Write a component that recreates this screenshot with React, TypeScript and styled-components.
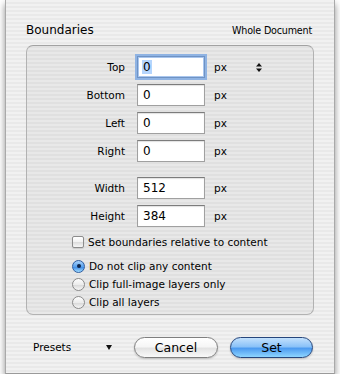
import styled, { createGlobalStyle, css } from 'styled-components'

const GlobalStyle = createGlobalStyle`
  body {
    margin: 0;
    background: #ffffff;
    font-family: "DejaVu Sans", "Liberation Sans", sans-serif;
    color: #000;
  }
`;

const stripes = css`
  background: repeating-linear-gradient(
    to bottom,
    #f1f1f1 0px,
    #f1f1f1 2px,
    #e9e9e9 2px,
    #e9e9e9 4px
  );
`;

const Sheet = styled.div`
  box-sizing: border-box;
  width: 330px;
  height: 374px;
  margin-left: 5px;
  padding: 22px 20px 0 20px;
  ${stripes};
  border-left: 1px solid #a9a9a9;
  border-right: 1px solid #a9a9a9;
  border-bottom: 1px solid #9a9a9a;
  box-shadow: 0 4px 7px rgba(0, 0, 0, 0.45);
  display: flex;
  flex-direction: column;
`;

const Header = styled.div`
  height: 16px;
  display: flex;
  align-items: center;
  justify-content: space-between;
`;

const Title = styled.div`
  font-size: 12px;
`;

const Scope = styled.div`
  font-size: 9.6px;
  letter-spacing: -0.2px;
  margin-right: 2px;
`;

const GroupBox = styled.div`
  box-sizing: border-box;
  margin-top: 7px;
  height: 270px;
  padding-top: 10px;
  border: 1px solid #b2b2b2;
  border-top-color: #a2a2a2;
  border-radius: 7px;
  background: rgba(0, 0, 0, 0.035);
  display: flex;
  flex-direction: column;
`;

const FieldRow = styled.div<{ $spaced?: boolean }>`
  height: 22px;
  display: flex;
  align-items: center;
  margin-bottom: 6px;
  margin-top: ${p => (p.$spaced ? '9px' : '0')};
`;

const Label = styled.div`
  width: 98px;
  text-align: right;
  font-size: 10.5px;
`;

const Field = styled.div<{ $focused?: boolean }>`
  box-sizing: border-box;
  width: 68px;
  height: 22px;
  margin-left: 12px;
  padding: 0 0 0 5px;
  background: #fff;
  border: 1px solid #a0a0a0;
  border-top-color: #7c7c7c;
  box-shadow: inset 0 1px 1px rgba(0, 0, 0, 0.12);
  font-size: 12px;
  display: flex;
  align-items: center;
  ${p =>
    p.$focused &&
    css`
      border-color: #6f93c4;
      box-shadow: 0 0 0 2px #8fb3e3, inset 0 0 0 1px #a9c6ee;
    `}
`;

const Selected = styled.span`
  background: #b5d5fd;
  padding: 0 1px;
  margin-left: -1px;
`;

const Unit = styled.div`
  margin-left: 9px;
  width: 12px;
  font-size: 10.5px;
`;

const Stepper = styled.svg`
  margin-left: 30px;
`;

const CheckRow = styled.label`
  display: flex;
  align-items: center;
  height: 14px;
  margin-top: 2px;
  padding-left: 45px;
  font-size: 10.5px;
`;

const CheckBox = styled.span`
  box-sizing: border-box;
  width: 12px;
  height: 12px;
  margin-right: 4px;
  border: 1px solid #8c8c8c;
  border-radius: 2px;
  background: linear-gradient(#ffffff, #f2f2f2 50%, #dedede 55%, #f7f7f7);
  box-shadow: 0 1px 1px rgba(0, 0, 0, 0.12);
`;

const RadioGroup = styled.div`
  margin-top: 8px;
  display: flex;
  flex-direction: column;
`;

const RadioRow = styled.label`
  display: flex;
  align-items: center;
  height: 18px;
  padding-left: 45px;
  font-size: 10.5px;
`;

const RadioDot = styled.span<{ $on?: boolean }>`
  box-sizing: border-box;
  width: 13px;
  height: 13px;
  margin-right: 4px;
  border-radius: 50%;
  border: 1px solid #8a8a8a;
  background: linear-gradient(#fdfdfd, #ececec 50%, #d9d9d9 55%, #f6f6f6);
  display: flex;
  align-items: center;
  justify-content: center;
  ${p =>
    p.$on &&
    css`
      border-color: #2f5da0;
      background: linear-gradient(#aad3fb, #5aa2ee 50%, #3f8be6 55%, #9fdcff);
      &::after {
        content: '';
        width: 4px;
        height: 4px;
        border-radius: 50%;
        background: #0f2448;
      }
    `}
`;

const Footer = styled.div`
  margin-top: 21px;
  height: 22px;
  display: flex;
  align-items: center;
  padding-left: 7px;
`;

const Presets = styled.div`
  width: 79px;
  display: flex;
  align-items: center;
  justify-content: space-between;
  font-size: 10.5px;
`;

const Button = styled.button<{ $primary?: boolean }>`
  box-sizing: border-box;
  height: 21px;
  border-radius: 11px;
  padding: 0;
  font-family: inherit;
  font-size: 12.5px;
  color: #000;
  border: 1px solid #7f7f7f;
  background: linear-gradient(#ffffff, #f6f6f6 45%, #e3e3e3 55%, #f9f9f9);
  box-shadow: 0 1px 2px rgba(0, 0, 0, 0.2);
  ${p =>
    p.$primary &&
    css`
      border-color: #26467c;
      background: linear-gradient(#c3e1fd, #8bc2f8 45%, #4d9bf0 55%, #8dd5ff);
    `}
`;

const CancelButton = styled(Button)`
  width: 84px;
  margin-left: 22px;
`;

const SetButton = styled(Button)`
  width: 83px;
  margin-left: 12px;
`;

const fields = [
  { label: 'Top', value: '0', focused: true },
  { label: 'Bottom', value: '0' },
  { label: 'Left', value: '0' },
  { label: 'Right', value: '0' },
  { label: 'Width', value: '512', spaced: true },
  { label: 'Height', value: '384' },
]

const clipOptions = ['Do not clip any content', 'Clip full-image layers only', 'Clip all layers']

export default function App() {
  return (
    <>
      <GlobalStyle />
      <Sheet>
        <Header>
          <Title>Boundaries</Title>
          <Scope>Whole Document</Scope>
        </Header>
        <GroupBox>
          {fields.map(f => (
            <FieldRow key={f.label} $spaced={f.spaced}>
              <Label>{f.label}</Label>
              <Field $focused={f.focused}>
                {f.focused ? <Selected>{f.value}</Selected> : f.value}
              </Field>
              <Unit>px</Unit>
              {f.focused && (
                <Stepper width="6" height="9" viewBox="0 0 6 9">
                  <path d="M3 0 L6 3.5 L0 3.5 Z" fill="#111" />
                  <path d="M0 5.5 L6 5.5 L3 9 Z" fill="#111" />
                </Stepper>
              )}
            </FieldRow>
          ))}
          <CheckRow>
            <CheckBox />
            Set boundaries relative to content
          </CheckRow>
          <RadioGroup>
            {clipOptions.map((o, i) => (
              <RadioRow key={o}>
                <RadioDot $on={i === 0} />
                {o}
              </RadioRow>
            ))}
          </RadioGroup>
        </GroupBox>
        <Footer>
          <Presets>
            Presets
            <svg width="6" height="5" viewBox="0 0 6 5">
              <path d="M0 0 L6 0 L3 5 Z" fill="#111" />
            </svg>
          </Presets>
          <CancelButton>Cancel</CancelButton>
          <SetButton $primary>Set</SetButton>
        </Footer>
      </Sheet>
    </>
  )
}
